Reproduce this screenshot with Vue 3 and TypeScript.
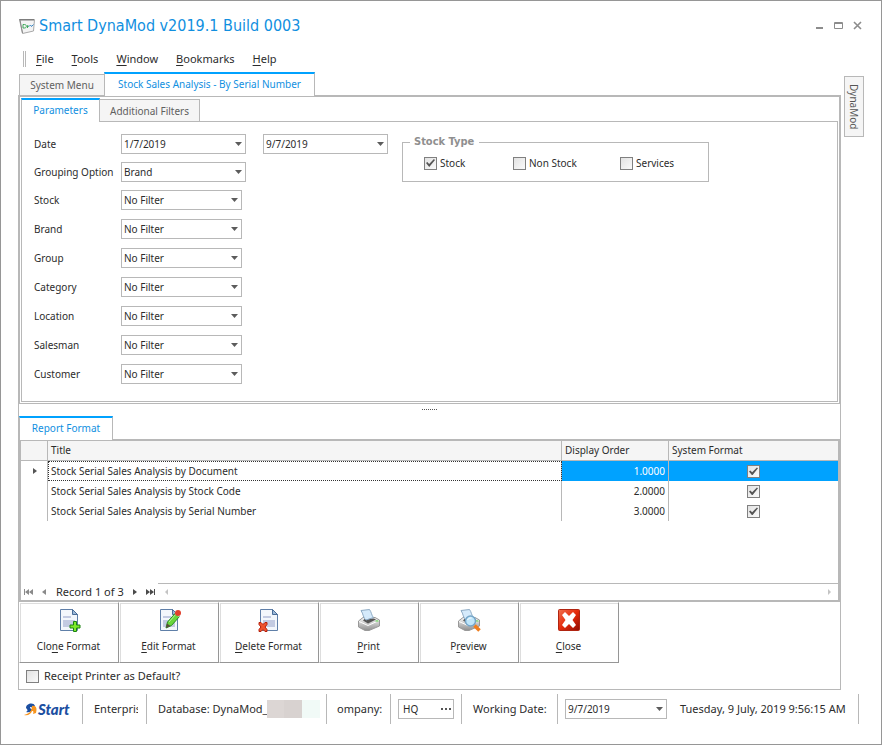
<script setup lang="ts">
import { ref } from 'vue'

interface MenuEntry { key: string; rest: string }
interface ReportRow { title: string; order: string; system: boolean }
interface StockType { id: string; label: string; checked: boolean }
interface Action { icon: string; before: string; key: string; after: string }

const menu: MenuEntry[] = [
  { key: 'F', rest: 'ile' },
  { key: 'T', rest: 'ools' },
  { key: 'W', rest: 'indow' },
  { key: 'B', rest: 'ookmarks' },
  { key: 'H', rest: 'elp' },
]

const filters: string[] = ['Stock', 'Brand', 'Group', 'Category', 'Location', 'Salesman', 'Customer']

const stockTypes = ref<StockType[]>([
  { id: 'type-stock', label: 'Stock', checked: true },
  { id: 'type-non-stock', label: 'Non Stock', checked: false },
  { id: 'type-services', label: 'Services', checked: false },
])

const rows = ref<ReportRow[]>([
  { title: 'Stock Serial Sales Analysis by Document', order: '1.0000', system: true },
  { title: 'Stock Serial Sales Analysis by Stock Code', order: '2.0000', system: true },
  { title: 'Stock Serial Sales Analysis by Serial Number', order: '3.0000', system: true },
])

const actions: Action[] = [
  { icon: 'clone', before: 'Clo', key: 'n', after: 'e Format' },
  { icon: 'edit', before: '', key: 'E', after: 'dit Format' },
  { icon: 'delete', before: '', key: 'D', after: 'elete Format' },
  { icon: 'print', before: '', key: 'P', after: 'rint' },
  { icon: 'preview', before: 'P', key: 'r', after: 'eview' },
  { icon: 'close', before: '', key: 'C', after: 'lose' },
]

const selected = ref(0)
const receiptDefault = ref(false)
const company = ref('HQ')
</script>

<template>
  <div class="window">
    <header class="titlebar">
      <svg class="app-icon" viewBox="0 0 16 16" aria-hidden="true">
        <path d="M.5 1.500h15l-1 11.500-11 2.500z" fill="#f4f4f4" stroke="#a8a8a8" />
        <path d="M0 1h15v1.500H1z" fill="#7d7d7d" />
        <path d="M1 2l2.500 13" stroke="#8a8a8a" />
        <path d="M4 6.500v3.500h1.500c2.500 0 2.500-3.500 0-3.500zM8.500 10V7.500l1.500 1" fill="none" stroke="#3fa95b" />
        <path d="M10 8.500l1.500-1.500 1 1.500L14.500 6.500" fill="none" stroke="#3a86c4" />
      </svg>
      <h1>Smart DynaMod v2019.1 Build 0003</h1>
      <div class="window-buttons">
        <button type="button" aria-label="Minimize"><svg viewBox="0 0 10 10"><path d="M1 6h7v2H1z" fill="#8c8c8c" /></svg></button>
        <button type="button" aria-label="Maximize"><svg viewBox="0 0 10 10"><path d="M.5 1.500h8v6h-8zM0 2.500h9" fill="none" stroke="#8c8c8c" /></svg></button>
        <button type="button" aria-label="Close window"><svg viewBox="0 0 10 10"><path d="M1 1l7 7M8 1L1 8" fill="none" stroke="#8c8c8c" stroke-width="1.600" /></svg></button>
      </div>
    </header>

    <nav class="menubar">
      <i class="grip"></i>
      <a v-for="m in menu" :key="m.key" href="#"><u>{{ m.key }}</u>{{ m.rest }}</a>
    </nav>

    <div class="body">
      <main class="main">
        <div class="tabs outer">
          <button type="button" class="tab">System Menu</button>
          <button type="button" class="tab active">Stock Sales Analysis - By Serial Number</button>
        </div>

        <div class="workspace">
          <section class="upper">
            <div class="tabs inner">
              <button type="button" class="tab active">Parameters</button>
              <button type="button" class="tab">Additional Filters</button>
            </div>
            <form class="parameters" @submit.prevent>
              <div class="fields">
                <div class="general">
                  <label for="date-from">Date</label>
                  <span class="combo"><select id="date-from"><option>1/7/2019</option></select></span>
                  <span class="combo"><select aria-label="Date to"><option>9/7/2019</option></select></span>
                  <label for="grouping">Grouping Option</label>
                  <span class="combo"><select id="grouping"><option>Brand</option></select></span>
                </div>
                <div class="filters">
                  <template v-for="f in filters" :key="f">
                    <label :for="'filter-' + f">{{ f }}</label>
                    <span class="combo"><select :id="'filter-' + f"><option>No Filter</option></select></span>
                  </template>
                </div>
              </div>
              <fieldset class="stock-type">
                <legend>Stock Type</legend>
                <span v-for="s in stockTypes" :key="s.id" class="check">
                  <input :id="s.id" v-model="s.checked" type="checkbox" />
                  <label :for="s.id">{{ s.label }}</label>
                </span>
              </fieldset>
            </form>
          </section>

          <div class="splitter"><i></i></div>

          <div class="tabs report">
            <button type="button" class="tab active">Report Format</button>
          </div>
          <section class="grid">
            <table>
              <colgroup><col class="c-mark" /><col /><col class="c-order" /><col class="c-system" /></colgroup>
              <thead>
                <tr><th></th><th>Title</th><th>Display Order</th><th>System Format</th></tr>
              </thead>
              <tbody>
                <tr v-for="(r, i) in rows" :key="r.title" :class="{ selected: i === selected }" @click="selected = i">
                  <td class="mark"><i v-if="i === selected"></i></td>
                  <td class="title">{{ r.title }}</td>
                  <td class="order">{{ r.order }}</td>
                  <td class="system"><input v-model="r.system" type="checkbox" :aria-label="'System format: ' + r.title" /></td>
                </tr>
              </tbody>
            </table>
            <div class="navigator">
              <div class="records">
                <button type="button" aria-label="First record"><svg viewBox="0 0 10 8"><path d="M0 1h1v6H0zM5 1v6L1 4zM9 1v6L5 4z" fill="#8a8a8a" /></svg></button>
                <button type="button" aria-label="Previous record"><svg viewBox="0 0 10 8"><path d="M6 1v6L2 4z" fill="#8a8a8a" /></svg></button>
                <span>Record 1 of 3</span>
                <button type="button" aria-label="Next record"><svg viewBox="0 0 10 8"><path d="M3 1v6l4-3z" fill="#4a4a4a" /></svg></button>
                <button type="button" aria-label="Last record"><svg viewBox="0 0 10 8"><path d="M0 1v6l4-3zM4 1v6l4-3zM8 1h1v6H8z" fill="#4a4a4a" /></svg></button>
              </div>
              <div class="scroll">
                <svg viewBox="0 0 10 8"><path d="M6 1v6L3 4z" fill="#c4c4c4" /></svg>
                <svg viewBox="0 0 10 8"><path d="M4 1v6l3-3z" fill="#c4c4c4" /></svg>
              </div>
            </div>
          </section>

          <div class="actions">
            <button v-for="a in actions" :key="a.icon" type="button">
              <svg viewBox="0 0 24 24" aria-hidden="true">
                <defs>
                  <linearGradient :id="'body-' + a.icon" x1="0" y1="0" x2="0" y2="1"><stop offset="0" stop-color="#f8f8f8" /><stop offset="1" stop-color="#8e8e8e" /></linearGradient>
                  <linearGradient :id="'red-' + a.icon" x1="0" y1="0" x2="1" y2="1"><stop offset="0" stop-color="#f0704f" /><stop offset=".5" stop-color="#e52b0b" /><stop offset="1" stop-color="#8f0a02" /></linearGradient>
                </defs>
                <g v-if="a.icon === 'clone' || a.icon === 'edit' || a.icon === 'delete'">
                  <path d="M3.500 1.500h12l5 5v16h-17z" fill="#f3f7fc" stroke="#5f7fa8" />
                  <path d="M15.500 1.500v5h5z" fill="#9db9d8" stroke="#4a6d99" />
                  <path d="M6 8h8v2H6zM6 12h12v7H6z" fill="#c3cbe2" />
                </g>
                <path v-if="a.icon === 'clone'" d="M16.500 13.500h3v3.500h3.500v3h-3.500v3.500h-3v-3.500h-3.500v-3h3.500z" fill="#7dea2b" stroke="#1c8212" />
                <g v-if="a.icon === 'edit'">
                  <path d="M9 20l1.500-6 8-9 4 3.500-8 9z" fill="#69d63c" stroke="#2b8f22" />
                  <path d="M12 14l7-8" stroke="#b6f29a" />
                  <path d="M9 20l1-4.500 3.500 2.500z" fill="#5b4a3a" />
                  <path d="M17.500 5l1-1 4.500 4-1 1z" fill="#d8d8d8" />
                  <circle cx="21" cy="5" r="3" fill="#e0402c" />
                </g>
                <path v-if="a.icon === 'delete'" d="M2 14.500h2l2 2 2-2h2v2l-2 2.500 2 2.500v2H8l-2-2-2 2H2v-2L4 19l-2-2.500z" fill="#f0532d" stroke="#b5200c" />
                <g v-if="a.icon === 'print' || a.icon === 'preview'">
                  <path d="M1.500 13L6 9.500h12l4.500 2.500v6L12 22.500H8L1.500 19z" :fill="'url(#body-' + a.icon + ')'" stroke="#999" />
                  <path d="M6 12.500l2-2h9l2 1-8 4z" fill="#555" />
                  <path d="M4 2.500l8.500-1c2 2.500 2 6 4 8l-7.500 2.500c-3-2-2.500-6-5-9.500z" fill="#d5eafb" stroke="#8daac4" />
                  <path d="M2 13.500l9 4 11-5" fill="none" stroke="#fff" />
                  <path d="M18.500 12.500h3v1h-3z" fill="#4cc63a" />
                </g>
                <g v-if="a.icon === 'preview'">
                  <path d="M17.500 17.500l5 5" stroke="#ef7d1d" stroke-width="3.500" />
                  <circle cx="13.500" cy="13" r="5" fill="#bfe6fb" stroke="#74a5c8" stroke-width="1.500" />
                  <path d="M10.500 12c1-2 3-2 4-2" fill="none" stroke="#fff" />
                </g>
                <g v-if="a.icon === 'close'">
                  <rect x="1.500" y="1.500" width="21" height="21" rx="1" :fill="'url(#red-' + a.icon + ')'" stroke="#b02411" />
                  <path d="M5 7l3-3 4 4 4-4 3 3-3.500 5 3.500 5-3 3-4-4-4 4-3-3 3.500-5z" fill="#fff" />
                </g>
              </svg>
              <span>{{ a.before }}<u>{{ a.key }}</u>{{ a.after }}</span>
            </button>
          </div>

          <div class="receipt">
            <input id="receipt" v-model="receiptDefault" type="checkbox" />
            <label for="receipt">Receipt Printer as Default?</label>
          </div>
        </div>
      </main>

      <aside><button type="button" class="side-tab">DynaMod</button></aside>
    </div>

    <footer class="status">
      <div class="cell logo">
        <svg viewBox="0 0 14 14" aria-hidden="true">
          <path d="M2 6c0-5 8-6 9-2l-3 1.500c-1-1-2-.5-2 .5l2 1.500c0 2.500-3 3-6 2.500 2-1 2-2 0-4z" fill="#1c4fa1" />
          <path d="M8 4c5-1 5 4 4 7l-3 1c1-3 0-3-1-3-1 3-4 5-8 4 4-1 8-3 8-9z" fill="#f7941d" />
        </svg>
        <b>Start</b>
      </div>
      <div class="cell edition"><span>Enterpris</span></div>
      <div class="cell database"><span>Database: DynaMod_</span><i></i></div>
      <div class="cell company-label"><span>ompany:</span></div>
      <div class="cell company">
        <span class="lookup">
          <input v-model="company" type="text" aria-label="Company" />
          <button type="button" aria-label="Choose company"><svg viewBox="0 0 12 4"><path d="M0 1h2v2H0zM4 1h2v2H4zM8 1h2v2H8z" fill="#555" /></svg></button>
        </span>
      </div>
      <div class="cell working"><label for="working-date">Working Date:</label></div>
      <div class="cell now">
        <span class="combo"><select id="working-date"><option>9/7/2019</option></select></span>
        <time>Tuesday, 9 July, 2019 9:56:15 AM</time>
      </div>
    </footer>
  </div>
</template>

<style>
body {
  background: #fff;
}
</style>

<style scoped>
.window {
  --line: #b8b8b8;
  --blue: #00a2ff;
  --link: #118fdf;
  --small: 10px;
  --medium: 11px;
  box-sizing: border-box;
  display: flex;
  flex-direction: column;
  min-height: 100vh;
  border: 1px solid #969696;
  background: #fff;
  color: #2c2c2c;
  font-family: "Noto Sans", sans-serif;
  font-size: var(--small);
  line-height: 14px;
  white-space: nowrap;
}
.window *,
.window *::before,
.window *::after {
  box-sizing: border-box;
}
button,
select,
input {
  margin: 0;
  padding: 0;
  border: 0;
  background: none;
  color: inherit;
  font: inherit;
}
svg {
  display: block;
}
.titlebar {
  display: flex;
  align-items: center;
  height: 49px;
  padding: 0 18px;
  gap: 4px;
}
.app-icon {
  width: 16px;
  height: 16px;
}
h1 {
  flex: 1;
  margin: 0;
  padding-top: 1px;
  color: var(--link);
  font-family: "DejaVu Sans Condensed", "DejaVu Sans", sans-serif;
  font-size: 16px;
  font-weight: 400;
  line-height: 24px;
}
.window-buttons {
  display: flex;
  gap: 9px;
}
.window-buttons svg {
  width: 10px;
  height: 10px;
}
.menubar {
  display: flex;
  align-items: center;
  height: 17px;
  margin-bottom: 5px;
  padding-left: 22px;
  gap: 18px;
  font-size: var(--medium);
}
.menubar a {
  color: inherit;
  text-decoration: none;
}
.grip {
  width: 3px;
  height: 16px;
  margin-right: -8px;
  border: solid var(--line);
  border-width: 0 1px;
}
u {
  text-underline-offset: 2px;
}
.body {
  display: flex;
  flex: 1;
  padding: 0 17px;
}
.main {
  display: flex;
  flex: 1;
  flex-direction: column;
  min-width: 0;
}
aside {
  padding: 4px 0 0 3px;
}
.side-tab {
  height: 61px;
  width: 20px;
  border: 1px solid var(--line);
  background: #f5f5f5;
  color: #555;
  writing-mode: vertical-rl;
}
.tabs {
  display: flex;
  align-items: flex-end;
}
.tab {
  height: 22px;
  padding-bottom: 2px;
  border: 1px solid var(--line);
  border-bottom: 0;
  background: #f5f5f5;
  color: #606060;
}
.tab.active {
  z-index: 1;
  height: 24px;
  border-top: 2px solid var(--blue);
  background: #fff;
  color: var(--link);
}
.outer {
  height: 24px;
  margin-bottom: -1px;
  padding-left: 1px;
}
.outer .tab {
  width: 86px;
}
.outer .active {
  width: 211px;
  margin-left: -1px;
}
.workspace {
  display: flex;
  flex: 1;
  flex-direction: column;
  border: 1px solid var(--line);
}
.upper {
  padding: 1px;
  border: 1px solid var(--line);
}
.inner {
  height: 24px;
  margin-bottom: -1px;
}
.inner .active {
  width: 79px;
}
.inner .tab:last-child {
  width: 101px;
  height: 23px;
  padding-bottom: 0;
  margin-left: -1px;
  border-bottom: 1px solid var(--line);
}
.parameters {
  display: flex;
  align-items: flex-start;
  padding: 12px 12px 17px;
  gap: 14px;
  border: 1px solid var(--line);
}
.general {
  display: grid;
  grid-template-columns: 87px 125px 125px;
  align-items: center;
  row-gap: 8px;
  margin-bottom: 8px;
}
.general .combo:nth-child(3) {
  margin-left: 17px;
  margin-right: -17px;
}
.filters {
  display: grid;
  grid-template-columns: 87px 121px;
  align-items: center;
  row-gap: 9px;
}
.combo {
  display: grid;
  grid-template-columns: 1fr 15px;
  align-items: center;
  height: 20px;
  border: 1px solid var(--line);
  background: #fff;
}
.combo select {
  grid-area: 1 / 1 / 2 / 3;
  height: 18px;
  width: 100%;
  padding-left: 2px;
  appearance: none;
}
.combo::after {
  grid-area: 1 / 2 / 2 / 3;
  width: 7px;
  height: 4px;
  margin-left: 5px;
  background: #5c5c5c;
  clip-path: polygon(0 0, 100% 0, 50% 100%);
  content: "";
  pointer-events: none;
}
.stock-type {
  display: grid;
  grid-template-columns: 89px 107px 1fr;
  width: 307px;
  margin: 1px 0 0 17px;
  padding: 7px 21px 11px;
  border: 1px solid var(--line);
}
legend {
  margin-left: -14px;
  padding: 0 5px 0 4px;
  color: #8f8f8f;
  font-family: "DejaVu Sans Condensed", "DejaVu Sans", sans-serif;
  font-size: 11px;
  font-weight: 700;
}
.check,
.receipt {
  display: flex;
  align-items: center;
  gap: 3px;
}
input[type="checkbox"] {
  display: inline-grid;
  place-items: center;
  width: 13px;
  height: 13px;
  border: 1px solid #808080;
  background: linear-gradient(135deg, #e2e2e2, #fafafa);
  appearance: none;
}
input[type="checkbox"]:checked::before {
  width: 9px;
  height: 8px;
  background: #555;
  clip-path: polygon(0 50%, 15% 38%, 35% 62%, 88% 0, 100% 12%, 36% 100%);
  content: "";
}
.splitter {
  display: flex;
  justify-content: center;
  padding: 5px 0 6px;
}
.splitter i {
  width: 15px;
  border-top: 1px dotted #555;
}
.report {
  margin-bottom: -1px;
}
.report .tab {
  width: 94px;
}
.grid {
  display: flex;
  flex: 1;
  flex-direction: column;
  justify-content: space-between;
  border: 2px solid var(--line);
}
table {
  width: 100%;
  border-spacing: 0;
  table-layout: fixed;
}
.c-mark {
  width: 27px;
}
.c-order {
  width: 107px;
}
.c-system {
  width: 169px;
}
th {
  height: 20px;
  padding: 0 3px 2px;
  border: solid var(--line);
  border-width: 0 1px 1px 0;
  background: #f5f5f5;
  font-weight: 400;
  text-align: left;
}
th:last-child {
  border-right: 0;
}
td {
  height: 20px;
  padding: 0 3px;
  border-right: 1px solid var(--line);
}
td:last-child {
  border-right: 0;
}
.mark i {
  display: block;
  width: 4px;
  height: 6px;
  margin-left: 9px;
  background: #555;
  clip-path: polygon(0 0, 100% 50%, 0 100%);
}
.order {
  text-align: right;
}
.system {
  padding-bottom: 1px;
  text-align: center;
}
.system input {
  vertical-align: middle;
}
.selected .title {
  outline: 1px dotted #333;
  outline-offset: -1px;
}
.selected .order,
.selected .system {
  background: var(--blue);
}
.selected .order {
  color: #fff;
}
.navigator {
  display: flex;
}
.records {
  display: flex;
  align-items: center;
  width: 137px;
  height: 17px;
  padding-left: 3px;
  gap: 6px;
  font-size: var(--medium);
}
.navigator svg {
  width: 10px;
  height: 8px;
}
.scroll {
  display: flex;
  flex: 1;
  align-items: center;
  justify-content: space-between;
  padding: 0 4px;
  border-top: 1px solid var(--line);
}
.actions {
  display: flex;
}
.actions button {
  display: flex;
  flex-direction: column;
  align-items: center;
  width: 100px;
  height: 61px;
  padding: 5px 1px 0 0;
  gap: 7px;
  border: 1px solid #fff;
  border-right-color: #969696;
  border-bottom-color: #969696;
  box-shadow: inset 1px 1px #ddd;
}
.actions svg {
  width: 24px;
  height: 24px;
}
.receipt {
  height: 26px;
  padding-left: 7px;
  gap: 5px;
  font-size: var(--medium);
}
.status {
  display: flex;
  height: 54px;
  padding: 4px 0 20px 17px;
  font-size: var(--medium);
}
.cell {
  display: flex;
  align-items: center;
  border-right: 1px solid var(--line);
}
.cell > span {
  overflow: hidden;
}
.logo {
  width: 65px;
  padding-left: 6px;
}
.logo svg {
  width: 14px;
  height: 14px;
}
.logo b {
  color: #1c4fa1;
  font: italic 900 15px/16px Lato, sans-serif;
}
.edition {
  width: 64px;
  padding: 0 8px 0 11px;
}
.database {
  width: 180px;
  padding-left: 11px;
}
.database i {
  width: 53px;
  height: 18px;
  background: linear-gradient(90deg, #dcd6d4 33%, #d8d2d0 33% 66%, #f1faf7 66%);
}
.company-label {
  justify-content: flex-end;
  width: 64px;
  padding: 0 8px 0 10px;
}
.company {
  width: 71px;
  padding-left: 7px;
}
.lookup {
  display: flex;
  align-items: center;
  width: 56px;
  height: 20px;
  border: 1px solid var(--line);
  font-size: var(--small);
}
.lookup input {
  flex: 1;
  min-width: 0;
  padding-left: 4px;
}
.lookup svg {
  width: 12px;
  height: 4px;
}
.working {
  width: 96px;
  padding-left: 11px;
}
.now {
  padding: 0 12px 0 7px;
  gap: 13px;
}
.now .combo {
  width: 102px;
  font-size: var(--small);
}
</style>
